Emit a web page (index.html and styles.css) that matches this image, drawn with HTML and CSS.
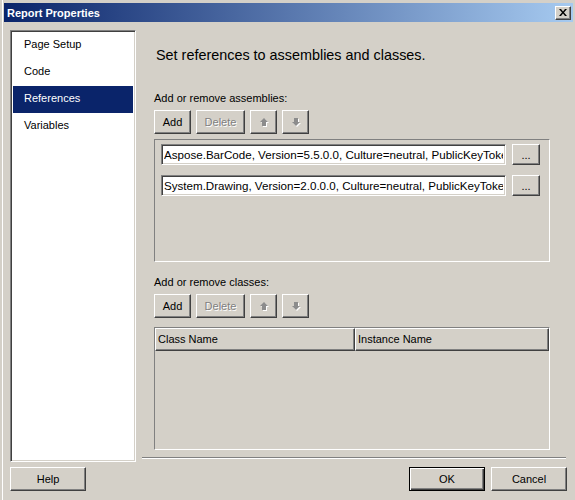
FILE: index.html
```html
<!DOCTYPE html>
<html>
<head>
<meta charset="utf-8">
<link rel="stylesheet" href="styles.css">
</head>
<body>
<div class="window">
  <div class="titlebar">
    <span class="title">Report Properties</span>
    <span class="close"><svg width="8" height="7" viewBox="0 0 8 7"><path d="M0 0h2l2 2.5L6 0h2L5 3.5 8 7H6L4 4.5 2 7H0l3-3.5z" fill="#000"/></svg></span>
  </div>
  <div class="main">
    <div class="nav">
      <div class="nav-item">Page Setup</div>
      <div class="nav-item">Code</div>
      <div class="nav-item selected">References</div>
      <div class="nav-item">Variables</div>
    </div>
    <div class="content">
      <div class="heading">Set references to assemblies and classes.</div>
      <div class="label first">Add or remove assemblies:</div>
      <div class="toolbar">
        <button class="btn add">Add</button>
        <button class="btn del disabled">Delete</button>
        <button class="btn arrow"><svg width="10" height="10" viewBox="0 0 10 10"><path d="M5 1l4 4H7v4H3V5H1z" fill="#fff" transform="translate(1 1)"/><path d="M5 1l4 4H7v4H3V5H1z" fill="#8c8c8c"/></svg></button>
        <button class="btn arrow"><svg width="10" height="10" viewBox="0 0 10 10"><path d="M3 1h4v4h2L5 9 1 5h2z" fill="#fff" transform="translate(1 1)"/><path d="M3 1h4v4h2L5 9 1 5h2z" fill="#8c8c8c"/></svg></button>
      </div>
      <div class="asm-panel">
        <div class="asm-row">
          <div class="textbox"><span class="tb-text">Aspose.BarCode, Version=5.5.0.0, Culture=neutral, PublicKeyToken</span></div>
          <button class="btn dots">...</button>
        </div>
        <div class="asm-row">
          <div class="textbox"><span class="tb-text">System.Drawing, Version=2.0.0.0, Culture=neutral, PublicKeyToken</span></div>
          <button class="btn dots">...</button>
        </div>
      </div>
      <div class="label second">Add or remove classes:</div>
      <div class="toolbar">
        <button class="btn add">Add</button>
        <button class="btn del disabled">Delete</button>
        <button class="btn arrow"><svg width="10" height="10" viewBox="0 0 10 10"><path d="M5 1l4 4H7v4H3V5H1z" fill="#fff" transform="translate(1 1)"/><path d="M5 1l4 4H7v4H3V5H1z" fill="#8c8c8c"/></svg></button>
        <button class="btn arrow"><svg width="10" height="10" viewBox="0 0 10 10"><path d="M3 1h4v4h2L5 9 1 5h2z" fill="#fff" transform="translate(1 1)"/><path d="M3 1h4v4h2L5 9 1 5h2z" fill="#8c8c8c"/></svg></button>
      </div>
      <div class="grid">
        <div class="grid-head">
          <div class="col col-class">Class Name</div>
          <div class="col col-inst">Instance Name</div>
        </div>
      </div>
      <div class="separator"></div>
    </div>
  </div>
  <div class="footer">
    <button class="btn fbtn">Help</button>
    <div class="footer-right">
      <button class="btn fbtn default">OK</button>
      <button class="btn fbtn">Cancel</button>
    </div>
  </div>
</div>
</body>
</html>
```
FILE: styles.css
```css
* { box-sizing: border-box; }
html, body { margin: 0; padding: 0; }
body {
  width: 575px;
  height: 500px;
  overflow: hidden;
  background: #d4d0c8;
  font-family: "Liberation Sans", Arial, sans-serif;
  font-size: 11px;
  color: #000;
}
.window {
  width: 575px;
  height: 500px;
  padding: 3px 2px 0 4px;
  border-left: 1px solid #d4d0c8;
  box-shadow: inset 1px 0 0 #d4d0c8, inset 2px 0 0 #ffffff;
}
.titlebar {
  height: 19px;
  margin-left: -1px;
  background: linear-gradient(to right, #0a246a, #a6caf0);
  display: flex;
  align-items: center;
  justify-content: space-between;
  padding: 0 2px 0 2px;
}
.title {
  color: #fff;
  font-weight: bold;
  font-size: 11px;
  padding-left: 1px;
}
.close {
  width: 16px;
  height: 14px;
  background: #d4d0c8;
  border-style: solid;
  border-width: 1px;
  border-color: #fff #404040 #404040 #fff;
  box-shadow: inset -1px -1px 0 #808080;
  display: flex;
  align-items: center;
  justify-content: center;
  padding-right: 1px;
  padding-bottom: 1px;
}
.main {
  display: flex;
  margin-top: 8px;
  margin-left: 5px;
}
.nav {
  width: 126px;
  height: 432px;
  background: #fff;
  border-style: solid;
  border-width: 1px;
  border-color: #808080 #fff #fff #808080;
  box-shadow: inset 1px 1px 0 #404040, inset -1px -1px 0 #d4d0c8;
  padding: 1px 2px 0 2px;
}
.nav-item {
  height: 27px;
  line-height: 25px;
  padding-left: 11px;
}
.nav-item.selected {
  background: #0a246a;
  color: #fff;
}
.content {
  width: 430px;
  padding-left: 18px;
  display: flex;
  flex-direction: column;
}
.heading {
  font-size: 14.4px;
  line-height: 18px;
  margin-top: 16px;
  margin-left: 2px;
}
.label {
  line-height: 13px;
}
.label.first { margin-top: 28px; }
.label.second { margin-top: 14px; }
.toolbar {
  display: flex;
  gap: 5px;
  margin-top: 5px;
}
.btn {
  font-family: "Liberation Sans", Arial, sans-serif;
  font-size: 11px;
  color: #000;
  background: #d4d0c8;
  border-style: solid;
  border-width: 1px;
  border-color: #fff #404040 #404040 #fff;
  box-shadow: inset -1px -1px 0 #808080;
  padding: 0;
  height: 24px;
  display: flex;
  align-items: center;
  justify-content: center;
}
.add { width: 37px; }
.del { width: 49px; }
.arrow { width: 27px; }
.disabled {
  color: #808080;
  text-shadow: 1px 1px 0 #fff;
}
.asm-panel {
  margin-top: 5px;
  width: 396px;
  height: 123px;
  border-style: solid;
  border-width: 1px;
  border-color: #808080 #fff #fff #808080;
  padding: 4px 0 0 6px;
  display: flex;
  flex-direction: column;
  gap: 10px;
}
.asm-row {
  display: flex;
  gap: 6px;
}
.textbox {
  width: 345px;
  height: 21px;
  background: #fff;
  border-style: solid;
  border-width: 1px;
  border-color: #808080 #fff #fff #808080;
  box-shadow: inset 1px 1px 0 #404040, inset -1px -1px 0 #d4d0c8;
  white-space: nowrap;
  overflow: hidden;
  line-height: 19px;
  padding-left: 2px;
  font-size: 11.6px;
}
.tb-text {
  display: inline-block;
  max-width: 339px;
  overflow: hidden;
  vertical-align: top;
}
.dots {
  width: 28px;
  height: 21px;
}
.grid {
  margin-top: 9px;
  width: 396px;
  height: 123px;
  border-style: solid;
  border-width: 1px;
  border-color: #808080 #fff #fff #808080;
}
.grid-head {
  display: flex;
  height: 23px;
}
.col {
  border-style: solid;
  border-width: 1px;
  border-color: #fff #404040 #404040 #fff;
  box-shadow: inset -1px -1px 0 #808080;
  line-height: 20px;
  padding-left: 2px;
}
.col-class { width: 200px; }
.col-inst { flex: 1; }
.separator {
  margin-top: 7px;
  margin-left: -12px;
  width: 424px;
  height: 2px;
  border-top: 1px solid #808080;
  border-bottom: 1px solid #fff;
}
.footer {
  display: flex;
  justify-content: space-between;
  margin-top: 5px;
  padding-left: 5px;
  padding-right: 6px;
}
.footer-right {
  display: flex;
  gap: 6px;
}
.fbtn {
  width: 76px;
  height: 24px;
}
.default {
  border: 1px solid #000;
  box-shadow: inset 1px 1px 0 #fff, inset -1px -1px 0 #404040, inset -2px -2px 0 #808080;
}
```
